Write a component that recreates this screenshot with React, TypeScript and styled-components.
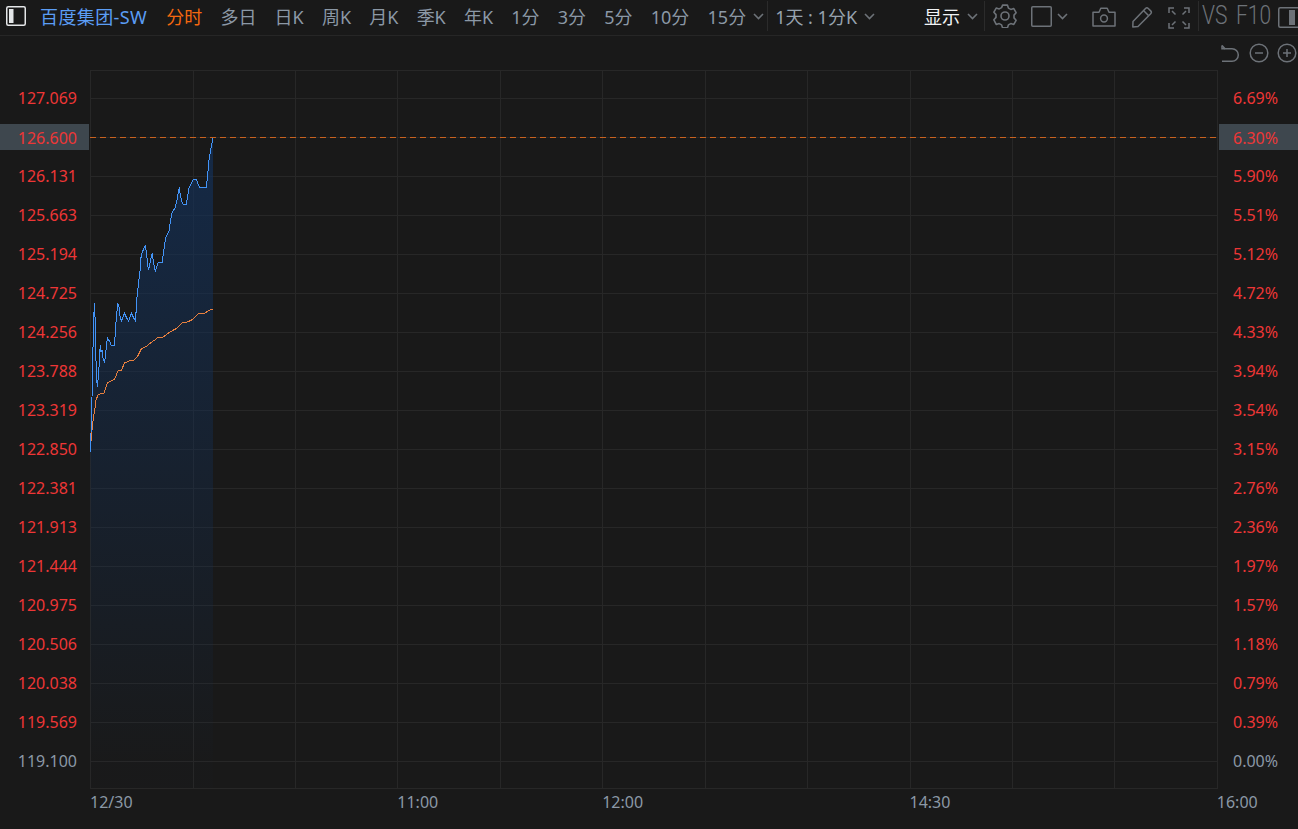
import styled, { createGlobalStyle } from "styled-components";

const GlobalStyle = createGlobalStyle`
  html, body {
    margin: 0;
    padding: 0;
    height: 100%;
    overflow: hidden;
    background: #191919;
  }
  #root { height: 100%; }
`;

const FONT = `"Noto Sans", "Noto Sans CJK SC", sans-serif`;
const ICON = "#6d7278";

const Page = styled.div`
  display: flex;
  flex-direction: column;
  width: 1298px;
  height: 829px;
  overflow: hidden;
  background: #191919;
  font-family: ${FONT};
`;

const Toolbar = styled.div`
  display: flex;
  align-items: center;
  height: 32px;
  flex: none;
  padding: 0 0 3px 6px;
  border-bottom: 1px solid #262626;
  white-space: nowrap;

  & > *,
  svg {
    flex: none;
  }
`;

const StockName = styled.span`
  margin: 0 19px 0 14px;
  font-size: 18px;
  letter-spacing: 0.4px;
  color: #5b9df5;
`;

const Tabs = styled.div`
  display: flex;
  align-items: center;
  gap: 18.2px;
`;

const Tab = styled.span<{ $active?: boolean }>`
  font-size: 18px;
  color: ${(p) => (p.$active ? "#f5680f" : "#8b98a6")};
`;

const Dropdown = styled.div<{ $left?: number }>`
  display: flex;
  align-items: center;
  gap: 7px;
  margin-left: ${(p) => p.$left ?? 0}px;
`;

const Divider = styled.div<{ $left: number }>`
  width: 1px;
  height: 30px;
  margin-left: ${(p) => p.$left}px;
  background: #2b2b2b;
`;

const RangeText = styled.span`
  font-size: 18px;
  color: #97a3af;
`;

const ShowText = styled.span`
  font-size: 18px;
  color: #f2f4f6;
`;

const IconSlot = styled.div<{ $left: number; $down?: number }>`
  display: flex;
  align-items: center;
  margin-left: ${(p) => p.$left}px;
  padding-top: ${(p) => p.$down ?? 0}px;
`;

const BrandText = styled.span<{ $left: number; $width: number }>`
  display: block;
  width: ${(p) => p.$width}px;
  margin-left: ${(p) => p.$left}px;
  font-family: Roboto, sans-serif;
  font-size: 25px;
  font-weight: 300;
  line-height: 30px;
  color: ${ICON};
  transform: scaleX(0.84);
  transform-origin: left center;
`;

const ZoomRow = styled.div`
  display: flex;
  align-items: center;
  justify-content: flex-end;
  gap: 8px;
  height: 34px;
  flex: none;
  padding-right: 1px;
`;

const ChartRow = styled.div`
  display: flex;
  height: 719px;
  flex: none;
`;

const Axis = styled.div<{ $side: "left" | "right" }>`
  display: flex;
  flex-direction: column;
  flex: none;
  width: ${(p) => (p.$side === "left" ? 90 : 80)}px;
  padding-top: 8px;
  box-sizing: border-box;
`;

const AxisCell = styled.div`
  display: flex;
  align-items: center;
  height: 39px;
`;

const AxisLabel = styled.span<{ $side: "left" | "right"; $tone: "up" | "flat"; $tag?: boolean }>`
  display: flex;
  align-items: center;
  justify-content: ${(p) => (p.$side === "left" ? "flex-end" : "flex-start")};
  box-sizing: border-box;
  width: ${(p) => (p.$side === "left" ? 89 : 80)}px;
  margin-left: ${(p) => (p.$side === "left" ? 0 : 1)}px;
  height: 26px;
  padding: ${(p) => (p.$side === "left" ? "0 12px 0 0" : "0 0 0 14px")};
  padding-top: ${(p) => (p.$tag ? 2 : 0)}px;
  font-size: 16px;
  color: ${(p) => (p.$tone === "up" ? "#ee3636" : "#8b98a6")};
  background: ${(p) => (p.$tag ? "#3e474e" : "transparent")};
`;

const Plot = styled.svg`
  display: block;
  flex: none;
  width: 1128px;
  height: 719px;
`;

const TimeAxis = styled.div`
  display: grid;
  grid-template-columns: repeat(12, 102.45px);
  align-items: center;
  height: 25px;
  padding-left: 90px;
  flex: none;
`;

const TimeLabel = styled.span<{ $col: number }>`
  grid-column: ${(p) => p.$col};
  grid-row: 1;
  font-size: 16px;
  color: #8b98a6;
  white-space: nowrap;
`;

const prices = [
  "127.069", "126.600", "126.131", "125.663", "125.194", "124.725", "124.256", "123.788", "123.319",
  "122.850", "122.381", "121.913", "121.444", "120.975", "120.506", "120.038", "119.569", "119.100",
];
const percents = [
  "6.69%", "6.30%", "5.90%", "5.51%", "5.12%", "4.72%", "4.33%", "3.94%", "3.54%",
  "3.15%", "2.76%", "2.36%", "1.97%", "1.57%", "1.18%", "0.79%", "0.39%", "0.00%",
];
const tabs = ["多日", "日K", "周K", "月K", "季K", "年K", "1分", "3分", "5分", "10分"];
const times = [
  { label: "12/30", col: 1 },
  { label: "11:00", col: 4 },
  { label: "12:00", col: 6 },
  { label: "14:30", col: 9 },
  { label: "16:00", col: 12 },
];

// traced from the picture, page coordinates
const priceLine = [
  [90.5, 452], [91, 433], [92, 397], [92.7, 359], [93.7, 322], [94.3, 303], [95.3, 322], [95.7, 347], [96.3, 373],
  [97.3, 387], [98, 380], [99, 367], [99.7, 353], [100.3, 345], [101, 352], [102, 350], [102.7, 357], [104.3, 362],
  [105.3, 358], [106.3, 347], [107.3, 338], [110, 342], [111, 345], [114.7, 345], [115.3, 330], [116.3, 319],
  [117.7, 303], [119, 307], [120.3, 318], [121.7, 321], [124.3, 313], [127.3, 319], [128.7, 321], [131.3, 313],
  [134.3, 319], [135.7, 321], [136.3, 305], [137.3, 294], [138.7, 282], [140, 271], [140.7, 259], [142, 253],
  [144, 248], [145.3, 246], [146.3, 252], [147, 258], [148.3, 270], [149.7, 265], [151, 258], [152.3, 253],
  [153.3, 262], [155.3, 271], [157.3, 265], [158.3, 262], [162.3, 262], [163.7, 251], [165, 242], [166, 237],
  [169.3, 230], [170.3, 222], [172, 213], [175, 208], [176.7, 202], [177.7, 196], [179.3, 187], [180.3, 195],
  [182, 202], [183, 204], [186.3, 204], [187.7, 196], [189, 188], [191, 184], [193.3, 179], [196.3, 179],
  [197.3, 182], [199.3, 187], [206.3, 187], [207.7, 175], [209, 160], [210.3, 152], [211.7, 145], [213, 138],
];
const avgLine = [
  [90.5, 447], [92, 430], [93.3, 419], [94.7, 410], [96, 400], [98, 395], [100, 394], [104, 393], [106, 387],
  [107.3, 383], [110.7, 381], [114.7, 379], [118, 371], [121.7, 370], [124.3, 363], [129.3, 361], [134.3, 360],
  [137.3, 357], [141.3, 349], [146.7, 346], [151.7, 342], [155, 340], [158.3, 337], [163.3, 337], [170, 332],
  [177.3, 328], [181.7, 323], [187.3, 322], [191.7, 320], [195, 317], [199.3, 313], [205, 313], [210, 310], [213.3, 309],
];

const toPoints = (pts: number[][]) => pts.map(([x, y]) => `${x},${y}`).join(" ");
const gridXs = [90, 193, 295, 397, 500, 602, 705, 807, 910, 1012, 1114, 1217].map((x) => x + 0.5);
const gridYs = prices.map((_, i) => 98.5 + i * 39);

const Chevron = () => (
  <svg width="11" height="7" viewBox="0 0 11 7" fill="none" stroke="#6d7278" strokeWidth="1.6">
    <path d="M1 1l4.5 4.5L10 1" />
  </svg>
);

const LogoIcon = () => (
  <svg width="20" height="20" viewBox="0 0 20 20" fill="none">
    <rect x="0.75" y="0.75" width="18.5" height="18.5" rx="1.5" stroke="#e4e6e8" strokeWidth="1.5" />
    <rect x="3" y="3" width="4.5" height="14" fill="#e4e6e8" />
  </svg>
);

const GearIcon = () => (
  <svg width="24" height="24" viewBox="0 0 24 24" fill="none" stroke={ICON} strokeWidth="1.6" strokeLinejoin="round">
    <path d="M9.6 1.6h4.8l1 3 2.4 1.3 3-.8 2.3 4.1-2.1 2.4v2.8l2.1 2.4-2.3 4.1-3-.8-2.4 1.3-1 3H9.6l-1-3-2.4-1.3-3 .8L.9 16.300l2.100-2.400v-2.800L.9 8.700l2.300-4.100 3 .8 2.400-1.300z" transform="translate(0 -0.5)" />
    <circle cx="12" cy="12" r="4" />
  </svg>
);

const SquareIcon = () => (
  <svg width="21" height="21" viewBox="0 0 21 21" fill="none" stroke={ICON} strokeWidth="1.5">
    <rect x="0.75" y="0.75" width="19.5" height="19.5" rx="1" />
  </svg>
);

const CameraIcon = () => (
  <svg width="24" height="20" viewBox="0 0 24 20" fill="none" stroke={ICON} strokeWidth="1.5" strokeLinejoin="round">
    <path d="M1 5.200h6l1.800-4h6.400l1.800 4h6v13.800H1z" />
    <circle cx="12" cy="11.500" r="3.400" />
  </svg>
);

const PencilIcon = () => (
  <svg width="22" height="22" viewBox="0 0 22 22" fill="none" stroke={ICON} strokeWidth="1.5" strokeLinejoin="round">
    <path d="M2 15.500L14.500 2.500a2 2 0 0 1 2.800 0l2.400 2.400a2 2 0 0 1 0 2.800L7 20.500l-5.200.5z" />
    <path d="M12.500 4.500l5 5" />
  </svg>
);

const FullscreenIcon = () => (
  <svg width="22" height="22" viewBox="0 0 22 22" fill="none" stroke={ICON} strokeWidth="1.500">
    <path d="M1 6V1h5M16 1h5v5M21 16v5h-5M6 21H1v-5" />
    <path d="M4 4l3.500 3.500M18 4l-3.500 3.500M18 18l-3.500-3.500M4 18l3.500-3.500" />
  </svg>
);

const PanelIcon = () => (
  <svg width="21" height="21" viewBox="0 0 21 21" fill="none">
    <rect x="0.75" y="0.75" width="22" height="19.500" rx="1.500" stroke={ICON} strokeWidth="1.500" />
    <rect x="11" y="3" width="6" height="15" fill={ICON} />
  </svg>
);

const UndoIcon = () => (
  <svg width="20" height="19" viewBox="0 0 20 19" fill="none" stroke={ICON} strokeWidth="1.500">
    <path d="M1 1.500l3 3.200H11a6.300 6.300 0 0 1 0 12.600H1" />
    <path d="M1 1.500v3.200h3" />
  </svg>
);

const RoundIcon = ({ plus }: { plus?: boolean }) => (
  <svg width="20" height="20" viewBox="0 0 20 20" fill="none" stroke={ICON} strokeWidth="1.500">
    <circle cx="10" cy="10" r="8.800" />
    <path d="M6 10h8" />
    {plus && <path d="M10 6v8" />}
  </svg>
);

export default function App() {
  return (
    <>
      <GlobalStyle />
      <Page>
        <Toolbar>
          <LogoIcon />
          <StockName>百度集团-SW</StockName>
          <Tabs>
            <Tab $active>分时</Tab>
            {tabs.map((t) => (
              <Tab key={t}>{t}</Tab>
            ))}
            <Dropdown>
              <Tab>15分</Tab>
              <Chevron />
            </Dropdown>
          </Tabs>
          <Divider $left={3} />
          <Dropdown $left={7}>
            <RangeText>1天 : 1分K</RangeText>
            <Chevron />
          </Dropdown>
          <Dropdown $left={49}>
            <ShowText>显示</ShowText>
            <Chevron />
          </Dropdown>
          <Divider $left={6} />
          <IconSlot $left={8}>
            <GearIcon />
          </IconSlot>
          <IconSlot $left={14}>
            <SquareIcon />
          </IconSlot>
          <IconSlot $left={5}>
            <Chevron />
          </IconSlot>
          <IconSlot $left={24} $down={2}>
            <CameraIcon />
          </IconSlot>
          <IconSlot $left={15} $down={2}>
            <PencilIcon />
          </IconSlot>
          <IconSlot $left={15} $down={3}>
            <FullscreenIcon />
          </IconSlot>
          <Divider $left={8} />
          <BrandText $left={3} $width={26}>VS</BrandText>
          <BrandText $left={8} $width={32}>F10</BrandText>
          <IconSlot $left={10} $down={2}>
            <PanelIcon />
          </IconSlot>
        </Toolbar>
        <ZoomRow>
          <UndoIcon />
          <RoundIcon />
          <RoundIcon plus />
        </ZoomRow>
        <ChartRow>
          <Axis $side="left">
            {prices.map((p, i) => (
              <AxisCell key={p}>
                <AxisLabel $side="left" $tone={i === 17 ? "flat" : "up"} $tag={i === 1}>
                  {p}
                </AxisLabel>
              </AxisCell>
            ))}
          </Axis>
          <Plot viewBox="90 70 1128 719">
            <defs>
              <linearGradient id="area" gradientUnits="userSpaceOnUse" x1="0" y1="138" x2="0" y2="760">
                <stop offset="0" stopColor="#133058" stopOpacity="0.72" />
                <stop offset="1" stopColor="#133058" stopOpacity="0.02" />
              </linearGradient>
            </defs>
            <g stroke="#272727" strokeWidth="1" shapeRendering="crispEdges">
              {gridXs.map((x) => (
                <line key={x} x1={x} x2={x} y1="70" y2="789" />
              ))}
              {[70.5, ...gridYs, 788.5].map((y) => (
                <line key={y} x1="90" x2="1218" y1={y} y2={y} />
              ))}
            </g>
            <polygon points={`${toPoints(priceLine)} 213,788 90.5,788`} fill="url(#area)" />
            <line x1="90" x2="1218" y1="137.500" y2="137.500" stroke="#c8621f" strokeWidth="1" strokeDasharray="6 4" shapeRendering="crispEdges" />
            <polyline points={toPoints(avgLine)} fill="none" stroke="#e8803f" strokeWidth="1" shapeRendering="crispEdges" />
            <polyline points={toPoints(priceLine)} fill="none" stroke="#4394f7" strokeWidth="1" shapeRendering="crispEdges" />
          </Plot>
          <Axis $side="right">
            {percents.map((p, i) => (
              <AxisCell key={p}>
                <AxisLabel $side="right" $tone={i === 17 ? "flat" : "up"} $tag={i === 1}>
                  {p}
                </AxisLabel>
              </AxisCell>
            ))}
          </Axis>
        </ChartRow>
        <TimeAxis>
          {times.map((t) => (
            <TimeLabel key={t.label} $col={t.col}>
              {t.label}
            </TimeLabel>
          ))}
        </TimeAxis>
      </Page>
    </>
  );
}
